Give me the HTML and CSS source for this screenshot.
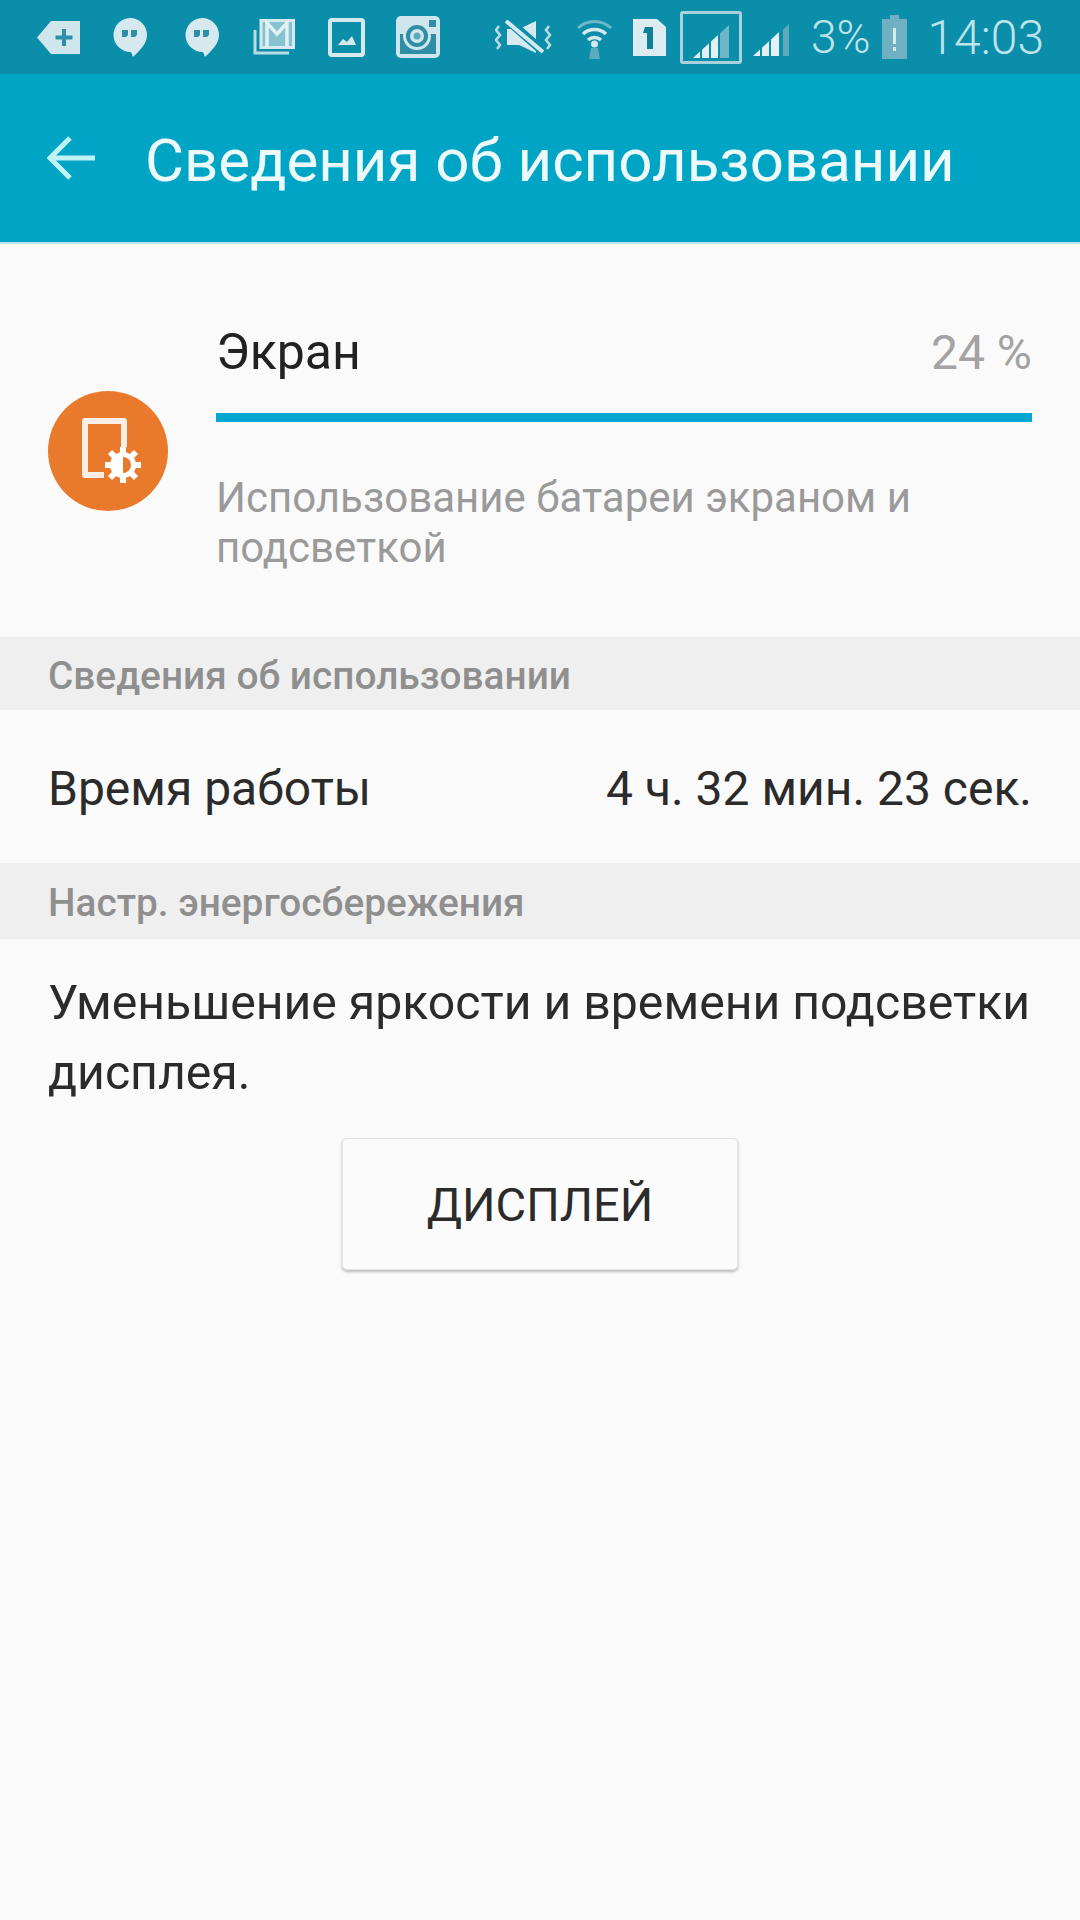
FILE: index.html
```html
<!DOCTYPE html>
<html lang="ru">
<head>
    <meta charset="UTF-8">
    <meta name="viewport" content="width=device-width, initial-scale=1.0">
    <title>Сведения об использовании</title>
    <link rel="stylesheet" href="styles.css">
</head>
<body>
    <div class="status-bar">
        <div class="status-left">
            <svg class="ic-tag" viewBox="0 0 43 33"><path d="M14 0H43V33H14L0 16.500Z" fill="#cfe6ec"/><path d="M27 8V25M18.500 16.500H35.500" stroke="#2f8ea6" stroke-width="4"/></svg>
            <svg class="ic-chat" viewBox="0 0 34 39"><path d="M17 0A17 17 0 0 1 34 17C34 26 27 32 20 39L18 34A17 17 0 0 1 17 0Z" fill="#d6e9ee"/><path d="M9 12h6v5l-2 2h-4ZM18 12h6v5l-2 2h-4Z" fill="#2f8ea6"/></svg>
            <svg class="ic-chat" viewBox="0 0 34 39"><path d="M17 0A17 17 0 0 1 34 17C34 26 27 32 20 39L18 34A17 17 0 0 1 17 0Z" fill="#d6e9ee"/><path d="M9 12h6v5l-2 2h-4ZM18 12h6v5l-2 2h-4Z" fill="#2f8ea6"/></svg>
            <svg class="ic-mail" viewBox="0 0 42 36"><path d="M2 11V34H36" fill="none" stroke="#b9dce4" stroke-width="3"/><rect x="8" y="1.500" width="32.500" height="27" fill="#86c2d0" stroke="#d6e9ee" stroke-width="3"/><path d="M14 27V4L24 15 34 4V27" fill="none" stroke="#e3f1f4" stroke-width="3.500"/></svg>
            <svg class="ic-photo" viewBox="0 0 37 39"><rect x="2" y="2" width="33" height="35" rx="2" fill="none" stroke="#d6e9ee" stroke-width="4"/><path d="M10 27 15 21 19 24 24 18 28 27Z" fill="#d6e9ee"/></svg>
            <svg class="ic-insta" viewBox="0 0 44 42"><rect width="44" height="42" rx="5" fill="#cfe6ec"/><rect x="4" y="18" width="36" height="20" fill="#2f8ea6"/><circle cx="21" cy="20" r="14" fill="#cfe6ec"/><circle cx="21" cy="20" r="11" fill="#2f8ea6"/><circle cx="21" cy="20" r="7" fill="#cfe6ec"/><circle cx="21" cy="20" r="3.500" fill="#5fa9bd"/><rect x="33" y="4" width="7" height="7" fill="#2f8ea6"/></svg>
        </div>
        <div class="status-right">
            <svg class="ic-mute" viewBox="0 0 58 34"><path d="M12 9H24L41 1V33L24 25H12Z" fill="#d6e9ee"/><path d="M10 -2 50 33" stroke="#0a8ea9" stroke-width="9"/><path d="M11 1 48 32" stroke="#d6e9ee" stroke-width="4"/><path d="M4 6 1 10 5 15 1 20 5 25 2 29M54 6 51 10 55 15 51 20 55 25 52 29" fill="none" stroke="#b9dce4" stroke-width="2.500"/></svg>
            <svg class="ic-wifi" viewBox="0 0 37 44"><path d="M2 13A24 24 0 0 1 35 13" fill="none" stroke="#6fb6c8" stroke-width="3"/><path d="M7 19A17 17 0 0 1 30 19" fill="none" stroke="#d6e9ee" stroke-width="3.500"/><path d="M12 25A10 10 0 0 1 25 25" fill="none" stroke="#d6e9ee" stroke-width="3.500"/><circle cx="18.500" cy="29" r="3.500" fill="#d6e9ee"/><path d="M15 33H22L24 44H13Z" fill="#5fa9bd"/></svg>
            <svg class="ic-sim" viewBox="0 0 33 37"><path d="M0 0H24L33 8V37H0Z" fill="#dcecf0"/><path d="M12 8H20V30H14V14H10Z" fill="#0f7f98"/></svg>
            <div class="signal-box">
                <svg class="ic-signal" viewBox="0 0 38 38"><path d="M0 38 7 31.500V38ZM9 38V29.700L16 23.300V38ZM18 38V21.400L25 15V38Z" fill="#e3f1f4"/><path d="M27 38V13.200L36 5V38Z" fill="#6fb6c8"/></svg>
            </div>
            <svg class="ic-signal-2" viewBox="0 0 38 38"><path d="M0 38 7 31.500V38ZM9 38V29.700L16 23.300V38ZM18 38V21.400L26 14V38Z" fill="#e3f1f4"/><path d="M30 38V11.500L36 6V38Z" fill="#5fa9bd"/></svg>
            <span class="status-pct">3%</span>
            <svg class="ic-battery" viewBox="0 0 25 44"><path d="M8 0H17V4H25V44H0V4H8Z" fill="#6fb0c2"/><path d="M11 13H14V29H11ZM11 32H14V36H11Z" fill="#d6e9ee"/></svg>
            <span class="status-time">14:03</span>
        </div>
    </div>

    <div class="app-bar">
        <svg class="ic-back" viewBox="0 0 50 46"><path d="M48 23H4M23 3 3 23 23 43" fill="none" stroke="#bff4f5" stroke-width="5"/></svg>
        <h1>Сведения об использовании</h1>
    </div>

    <div class="usage">
        <div class="usage-icon">
            <svg viewBox="0 0 120 120"><path d="M76 56V30H37V84H56" fill="none" stroke="#fbeee4" stroke-width="6" stroke-linejoin="round"/><path d="M75 56V92M57 74H93M62 61 88 87M88 61 62 87" stroke="#fff" stroke-width="6"/><circle cx="75" cy="74" r="13" fill="#fff"/><path d="M75 66A8 8 0 0 1 75 82Z" fill="#e97a2c"/></svg>
        </div>
        <div class="usage-body">
            <div class="usage-head">
                <span class="usage-name">Экран</span>
                <span class="usage-pct">24 %</span>
            </div>
            <div class="usage-line"></div>
            <p class="usage-desc">Использование батареи экраном и подсветкой</p>
        </div>
    </div>

    <div class="section-title">Сведения об использовании</div>
    <div class="info-row">
        <span>Время работы</span>
        <span>4 ч. 32 мин. 23 сек.</span>
    </div>

    <div class="section-title section-second">Настр. энергосбережения</div>
    <p class="saving-text">Уменьшение яркости и времени подсветки дисплея.</p>
    <button class="display-btn" type="button">ДИСПЛЕЙ</button>
</body>
</html>
```

FILE: styles.css
```css
* {
    box-sizing: border-box;
}
body {
    margin: 0;
    width: 1080px;
    height: 1920px;
    overflow: hidden;
    background-color: #fafafa;
    font-family: Roboto, "Noto Sans", sans-serif;
    color: #2b2b2b;
}
.status-bar {
    height: 74px;
    background-color: #0a8ea9;
    display: flex;
    align-items: center;
    justify-content: space-between;
    padding: 0 36px 0 37px;
    color: #bfe3ea;
}
.status-bar svg {
    display: block;
    flex: none;
}
.status-left, .status-right {
    display: flex;
    align-items: center;
}
.ic-tag { width: 43px; height: 33px; margin-right: 33px; }
.ic-chat { width: 34px; height: 39px; margin-right: 38px; }
.ic-mail { width: 42px; height: 36px; margin: 0 33px 0 -4px; }
.ic-photo { width: 37px; height: 39px; margin-right: 31px; }
.ic-insta { width: 44px; height: 42px; }
.ic-mute { width: 58px; height: 34px; margin-right: 23px; }
.ic-wifi { width: 37px; height: 44px; margin-right: 20px; }
.ic-sim { width: 33px; height: 37px; margin-right: 14px; }
.signal-box {
    width: 62px;
    height: 53px;
    border: 3px solid #a8d3dd;
    border-radius: 3px;
    margin-right: 11px;
    padding: 6px 0 0 10px;
}
.ic-signal { width: 38px; height: 38px; }
.ic-signal-2 { width: 38px; height: 38px; margin-right: 20px; }
.status-pct {
    font-size: 46px;
    font-weight: 300;
    margin-right: 12px;
}
.ic-battery { width: 25px; height: 44px; margin-right: 20px; }
.status-time {
    font-size: 48px;
    font-weight: 300;
}
.app-bar {
    height: 170px;
    background-color: #00a5c6;
    display: flex;
    align-items: center;
    padding-left: 47px;
    border-bottom: 2px solid #b8e6ef;
}
.ic-back {
    width: 50px;
    height: 46px;
    margin-right: 48px;
}
h1 {
    margin: 4px 0 0;
    font-size: 60px;
    font-weight: 400;
    color: #edfafb;
}
.usage {
    height: 393px;
    display: flex;
    align-items: flex-start;
    padding: 0 48px;
}
.usage-icon {
    width: 120px;
    height: 120px;
    border-radius: 50%;
    background-color: #e97a2c;
    margin: 147px 48px 0 0;
    flex: none;
}
.usage-icon svg {
    display: block;
    width: 120px;
    height: 120px;
}
.usage-body {
    flex: 1;
    padding-top: 78px;
}
.usage-head {
    height: 60px;
    line-height: 60px;
    display: flex;
    justify-content: space-between;
    align-items: baseline;
}
.usage-name {
    font-size: 50px;
    color: #222;
}
.usage-pct {
    font-size: 48px;
    color: #a3a3a3;
}
.usage-line {
    height: 9px;
    background-color: #00a7d3;
    margin-top: 31px;
}
.usage-desc {
    margin: 51px 0 0;
    font-size: 42px;
    line-height: 50px;
    color: #9a9a9a;
}
.section-title {
    height: 73px;
    background-color: #efefef;
    display: flex;
    align-items: center;
    padding: 3px 0 0 48px;
    font-size: 38.800px;
    font-weight: 500;
    color: #8f8f8f;
}
.info-row {
    height: 153px;
    display: flex;
    align-items: center;
    justify-content: space-between;
    padding: 3px 48px 0;
    font-size: 48px;
}
.section-second {
    height: 76px;
}
.saving-text {
    margin: 29px 48px 0;
    font-size: 48.200px;
    line-height: 70px;
}
.display-btn {
    display: block;
    width: 396px;
    height: 132px;
    margin: 30px 0 0 342px;
    background-color: #fbfbfb;
    border: 1px solid #e2e2e2;
    border-radius: 5px;
    box-shadow: 0 2px 3px rgba(0, 0, 0, 0.25);
    font-family: inherit;
    font-size: 47px;
    color: #2b2b2b;
}
```
